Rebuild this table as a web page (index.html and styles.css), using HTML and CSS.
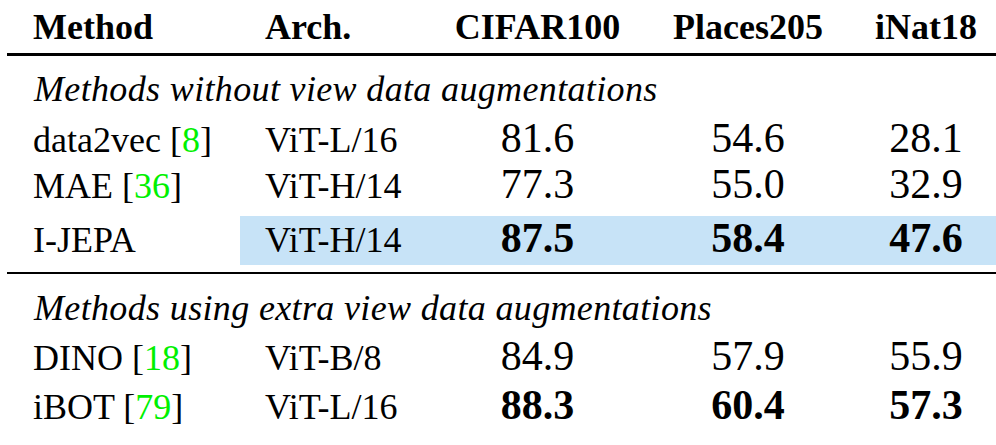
FILE: index.html
```html
<!DOCTYPE html>
<html lang="en">
<head>
    <meta charset="UTF-8">
    <meta name="viewport" content="width=device-width, initial-scale=1.0">
    <title>Results table</title>
    <link rel="stylesheet" href="styles.css">
</head>
<body>
    <table class="results">
        <colgroup>
            <col class="col-method">
            <col class="col-arch">
            <col class="col-cifar">
            <col class="col-places">
            <col class="col-inat">
        </colgroup>
        <thead>
            <tr>
                <th class="method">Method</th>
                <th class="arch">Arch.</th>
                <th>CIFAR100</th>
                <th>Places205</th>
                <th>iNat18</th>
            </tr>
        </thead>
        <tbody>
            <!-- no extra augmentations -->
            <tr class="group group-first">
                <td colspan="5">Methods without view data augmentations</td>
            </tr>
            <tr class="row-data2vec">
                <td class="method">data2vec [<a class="cite" href="#">8</a>]</td>
                <td class="arch">ViT-L/16</td>
                <td class="num">81.6</td>
                <td class="num">54.6</td>
                <td class="num">28.1</td>
            </tr>
            <tr class="row-mae">
                <td class="method">MAE [<a class="cite" href="#">36</a>]</td>
                <td class="arch">ViT-H/14</td>
                <td class="num">77.3</td>
                <td class="num">55.0</td>
                <td class="num">32.9</td>
            </tr>
            <tr class="row-ours">
                <td class="method">I-JEPA</td>
                <td class="arch hl">ViT-H/14</td>
                <td class="num best hl">87.5</td>
                <td class="num best hl">58.4</td>
                <td class="num best hl">47.6</td>
            </tr>

            <!-- with extra augmentations -->
            <tr class="group group-second">
                <td colspan="5">Methods using extra view data augmentations</td>
            </tr>
            <tr class="row-dino">
                <td class="method">DINO [<a class="cite" href="#">18</a>]</td>
                <td class="arch">ViT-B/8</td>
                <td class="num">84.9</td>
                <td class="num">57.9</td>
                <td class="num">55.9</td>
            </tr>
            <tr class="row-ibot">
                <td class="method">iBOT [<a class="cite" href="#">79</a>]</td>
                <td class="arch">ViT-L/16</td>
                <td class="num best">88.3</td>
                <td class="num best">60.4</td>
                <td class="num best">57.3</td>
            </tr>
        </tbody>
    </table>
</body>
</html>
```

FILE: styles.css
```css
body {
    margin: 0;
    font-family: "Liberation Serif", "Times New Roman", serif;
    color: #000;
    background-color: #fff;
    overflow: hidden;
}

.results {
    margin-left: 7px;
    width: 995px;
    border-collapse: separate;
    border-spacing: 0;
    table-layout: fixed;
}

.col-method { width: 233px; }
.col-arch { width: 189px; }
.col-cifar { width: 217px; }
.col-places { width: 204px; }
.col-inat { width: 152px; }

.results th,
.results td {
    padding: 0 25px;
    font-size: 36px;
    line-height: 46px;
    vertical-align: baseline;
    text-align: center;
    white-space: nowrap;
}

.results .method {
    padding-left: 26px;
    text-align: left;
}

.results .arch {
    text-align: left;
}

.results thead th {
    font-weight: bold;
    padding-top: 4px;
    padding-bottom: 3px;
    border-bottom: 3px solid #000;
}

.results .num {
    font-size: 42px;
    line-height: 42px;
}

.results .best {
    font-weight: bold;
}

/* section headings inside the table */
.group td {
    font-style: italic;
    text-align: left;
    padding-left: 27px;
    letter-spacing: 0.35px;
}

.group-first td {
    padding-top: 10px;
    padding-bottom: 5px;
}

.group-second td {
    border-top: 2px solid #000;
    padding-top: 11px;
    padding-bottom: 4px;
}

.row-mae td {
    padding-bottom: 7px;
}

.row-ours td {
    padding-top: 1px;
    padding-bottom: 2px;
    border-bottom: 7px solid transparent;
    background-clip: padding-box;
}

.row-ours .hl {
    background-color: #c7e3f7;
}

.row-dino td {
    padding-bottom: 3px;
}

.cite {
    color: #00f000;
    text-decoration: none;
}
```
